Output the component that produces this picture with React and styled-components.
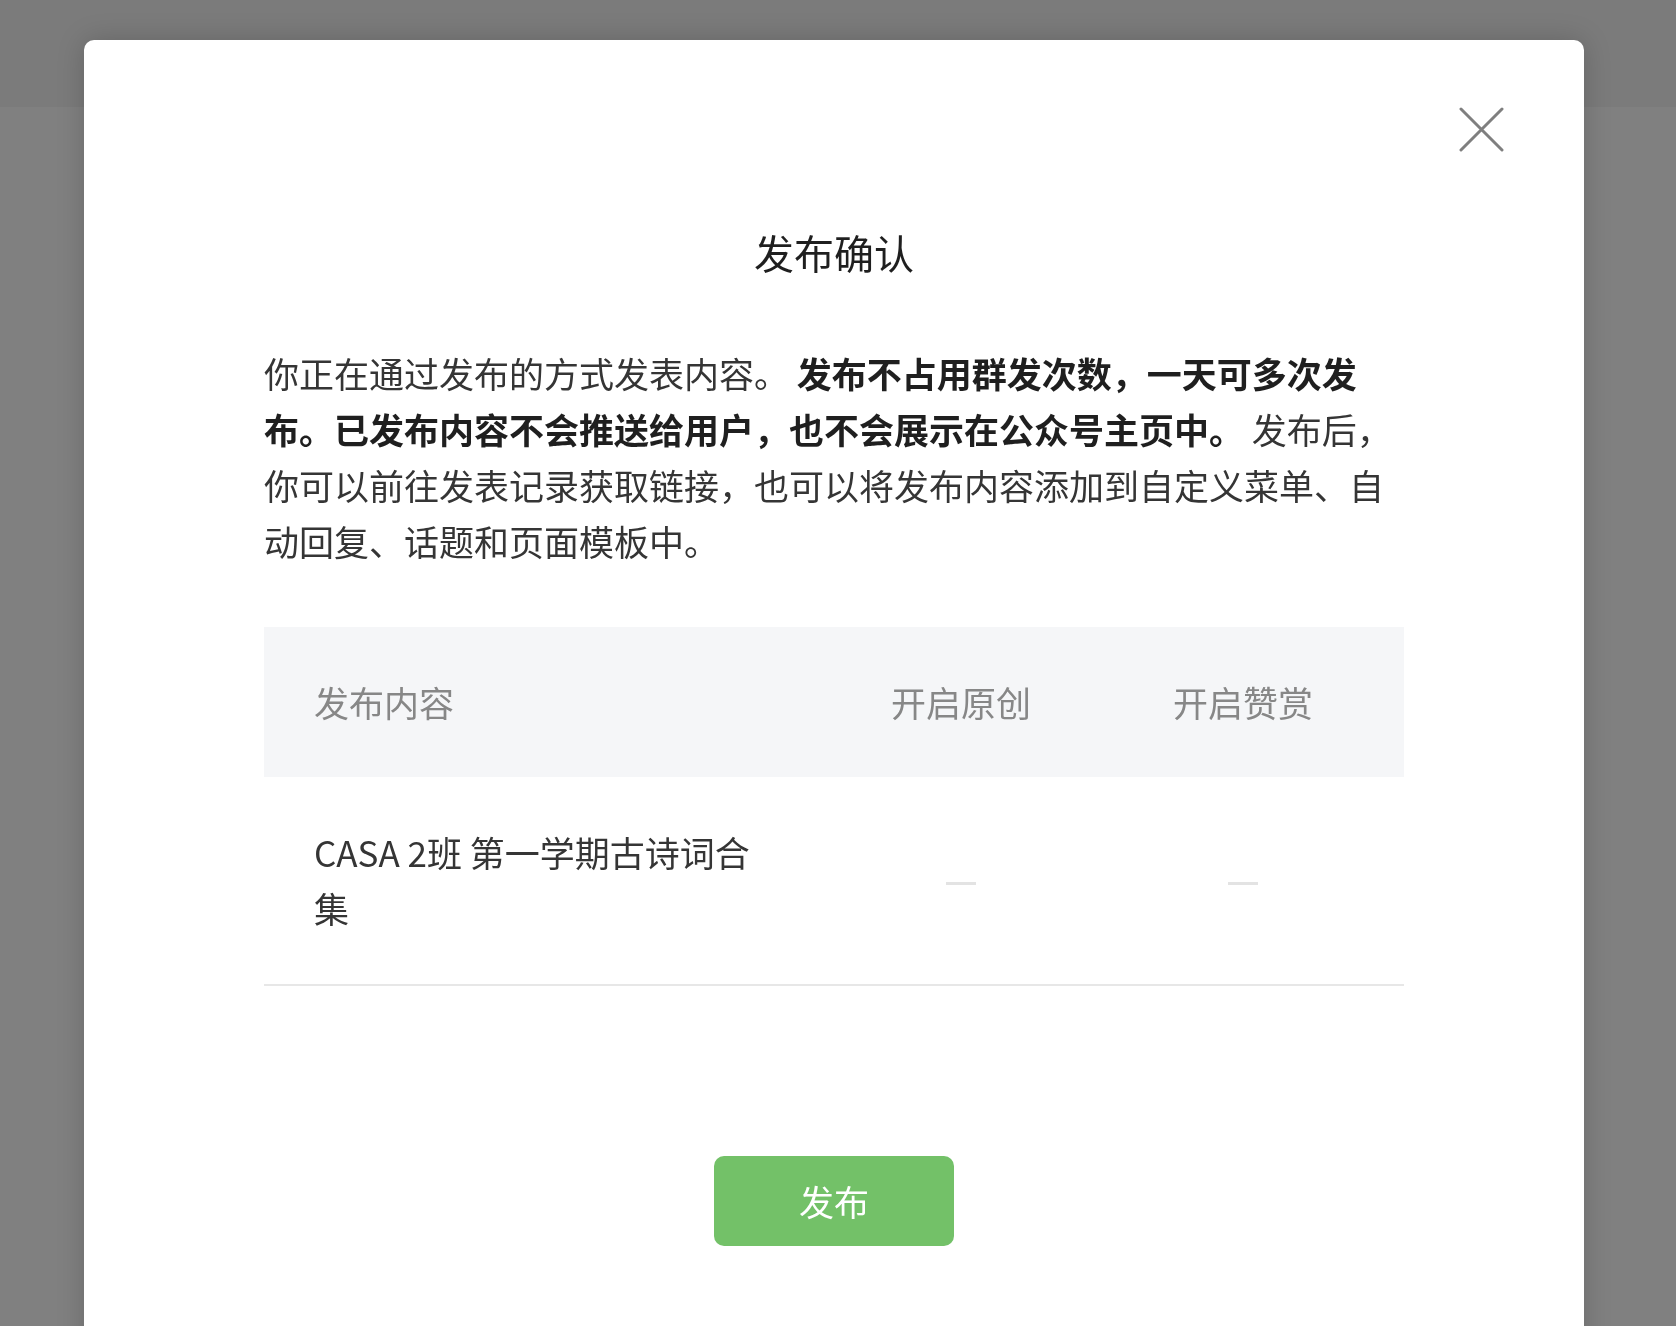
import styled, { createGlobalStyle } from "styled-components";

const GlobalStyles = createGlobalStyle`
  html, body {
    margin: 0;
    padding: 0;
  }
  body {
    background: #808080;
    font-family: "Noto Sans CJK SC", "Noto Sans", sans-serif;
    overflow: hidden;
  }
`;

const Screen = styled.div`
  min-height: 100vh;
  background: #808080;
`;

const PageHeader = styled.div`
  height: 107px;
  background: #7b7b7b;
`;

// the right padding stands in for the scrollbar gutter of the page below
const Overlay = styled.div`
  position: fixed;
  inset: 0;
  display: flex;
  justify-content: center;
  align-items: flex-start;
  padding: 40px 8px 0 0;
  overflow: hidden;
`;

const Modal = styled.div`
  position: relative;
  width: 1500px;
  min-height: 1400px;
  box-sizing: border-box;
  padding: 184px 180px 0;
  background: #fff;
  border-radius: 10px;
  box-shadow: 0 0 28px rgba(0, 0, 0, 0.18);
  display: flex;
  flex-direction: column;
`;

const CloseButton = styled.button`
  position: absolute;
  top: 67px;
  right: 80px;
  width: 45px;
  height: 45px;
  padding: 0;
  border: none;
  background: transparent;
  cursor: pointer;
  color: #7f7f7f;
  display: flex;
`;

const Title = styled.h2`
  margin: 0;
  font-size: 40px;
  line-height: 56px;
  font-weight: 400;
  color: #1f1f1f;
  text-align: center;
`;

const Description = styled.p`
  margin: 65px 0 0;
  font-size: 35px;
  line-height: 56px;
  color: #353535;

  strong {
    font-weight: 700;
    color: #1f1f1f;
  }
`;

const Table = styled.div`
  margin-top: 58px;
  display: flex;
  flex-direction: column;
`;

const Row = styled.div`
  display: grid;
  grid-template-columns: 550px 294px 1fr;
  align-items: center;
  background: ${(p) => (p.$head ? "#f5f6f8" : "#fff")};
  height: ${(p) => (p.$head ? "150px" : "auto")};
  border-bottom: ${(p) => (p.$head ? "none" : "2px solid #e7e7e7")};
`;

const Cell = styled.div`
  font-size: 35px;
  line-height: 56px;
  color: ${(p) => (p.$head ? "#878787" : "#353535")};
  text-align: ${(p) => (p.$center ? "center" : "left")};
  padding: ${(p) => p.$pad || "0"};
  display: ${(p) => (p.$center ? "flex" : "block")};
  justify-content: center;
`;

const Dash = styled.span`
  display: block;
  width: 30px;
  height: 3px;
  margin-top: 6px;
  background: #e3e3e3;
`;

const Footer = styled.div`
  margin-top: 170px;
  display: flex;
  justify-content: center;
`;

const PublishButton = styled.button`
  width: 240px;
  height: 90px;
  border: none;
  border-radius: 10px;
  background: #73c168;
  color: #fff;
  font-family: inherit;
  font-size: 35px;
  line-height: 56px;
  cursor: pointer;
`;

const columns = [
  { key: "content", label: "发布内容", pad: "0 0 0 50px" },
  { key: "original", label: "开启原创", center: true },
  { key: "reward", label: "开启赞赏", center: true, pad: "0 26px 0 0" },
];

const rows = [{ id: 1, title: "CASA 2班 第一学期古诗词合集" }];

function App() {
  return (
    <Screen>
      <GlobalStyles />
      <PageHeader />
      <Overlay>
        <Modal>
          <CloseButton aria-label="关闭">
            <svg width="45" height="45" viewBox="0 0 45 45" fill="none">
              <path
                d="M2 2L43 43M43 2L2 43"
                stroke="currentColor"
                strokeWidth="3"
                strokeLinecap="round"
              />
            </svg>
          </CloseButton>
          <Title>发布确认</Title>
          <Description>
            你正在通过发布的方式发表内容。{" "}
            <strong>
              发布不占用群发次数，一天可多次发布。已发布内容不会推送给用户，也不会展示在公众号主页中。
            </strong>{" "}
            发布后，你可以前往发表记录获取链接，也可以将发布内容添加到自定义菜单、自动回复、话题和页面模板中。
          </Description>
          <Table>
            <Row $head>
              {columns.map((c) => (
                <Cell key={c.key} $head $center={c.center} $pad={c.pad}>
                  {c.label}
                </Cell>
              ))}
            </Row>
            {rows.map((r) => (
              <Row key={r.id}>
                <Cell $pad="47px 50px 48px">{r.title}</Cell>
                <Cell $center>
                  <Dash />
                </Cell>
                <Cell $center $pad="0 26px 0 0">
                  <Dash />
                </Cell>
              </Row>
            ))}
          </Table>
          <Footer>
            <PublishButton>发布</PublishButton>
          </Footer>
        </Modal>
      </Overlay>
    </Screen>
  );
}

export default App;
